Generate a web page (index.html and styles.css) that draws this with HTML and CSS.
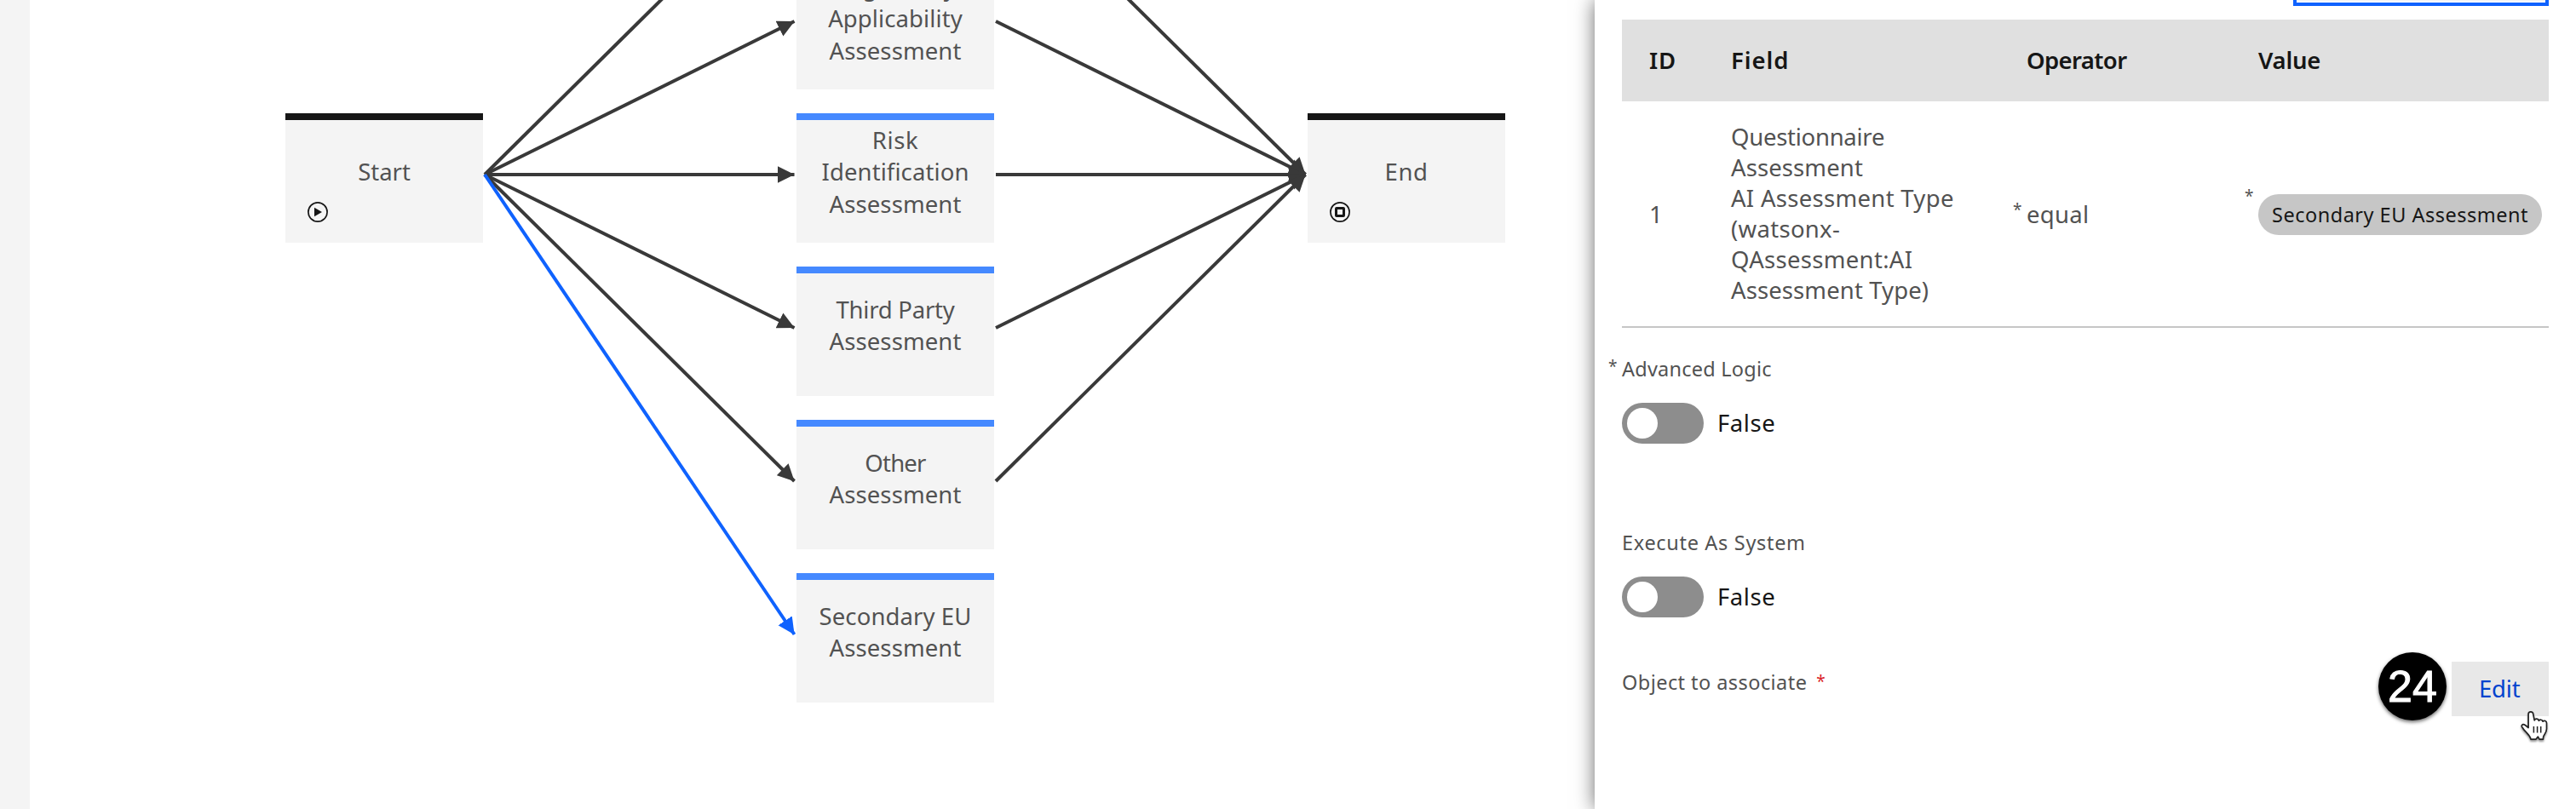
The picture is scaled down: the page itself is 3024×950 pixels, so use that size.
FILE: index.html
```
<!DOCTYPE html>
<html lang="en">
<head>
<meta charset="utf-8">
<title>Workflow designer</title>
<link rel="stylesheet" href="styles.css">
</head>
<body>
<div class="app">
  <aside class="rail"></aside>

  <main class="canvas">
    <svg class="edges" width="1837" height="950" viewBox="35 0 1837 950">
      <defs>
        <marker id="arrow" markerUnits="userSpaceOnUse" markerWidth="20" markerHeight="20" refX="19.5" refY="10" orient="auto"><path d="M0 0.2 19.7 10 0 19.8z" fill="#393939"/></marker>
        <marker id="arrow-active" markerUnits="userSpaceOnUse" markerWidth="20" markerHeight="20" refX="19.5" refY="10" orient="auto"><path d="M0 0.2 19.7 10 0 19.8z" fill="#0f62fe"/></marker>
      </defs>
      <g class="edge">
        <path d="M569 205 932.5-155"/>
        <path d="M569 205 932.5 25"/>
        <path d="M569 205H932.5"/>
        <path d="M569 205 932.5 385"/>
        <path d="M569 205 932.5 565"/>
        <path d="M1169-155 1532.5 205"/>
        <path d="M1169 25 1532.5 205"/>
        <path d="M1169 205H1532.5"/>
        <path d="M1169 385 1532.5 205"/>
        <path d="M1169 565 1532.5 205"/>
      </g>
      <path class="edge-active" d="M569 205 932.5 745"/>
    </svg>

    <div class="node terminal start"><span>Start</span>
      <svg class="mark" viewBox="0 0 24 24"><circle cx="12" cy="12" r="11.1" fill="none" stroke="#161616" stroke-width="1.7"/><path d="M8 6.8v10.4L17 12z" fill="#161616"/></svg>
    </div>
    <div class="node task n1"><span class="t1">Regulatory</span><span class="t1">Applicability</span><span class="t1">Assessment</span></div>
    <div class="node task n2"><span class="t6">Risk</span><span class="t1">Identification</span><span class="t1">Assessment</span></div>
    <div class="node task n3"><span class="tm2">Third Party</span><span class="t1">Assessment</span></div>
    <div class="node task n4"><span class="tm8">Other</span><span class="t1">Assessment</span></div>
    <div class="node task n5"><span class="t1">Secondary EU</span><span class="t1">Assessment</span></div>
    <div class="node terminal end"><span class="t6">End</span>
      <svg class="mark" viewBox="0 0 24 24"><circle cx="12" cy="12" r="11.1" fill="none" stroke="#161616" stroke-width="1.7"/><rect x="7.5" y="7.5" width="9" height="9" rx=".5" fill="none" stroke="#161616" stroke-width="3"/></svg>
    </div>
  </main>

  <section class="panel">
    <div class="focused"></div>

    <div class="table">
      <div class="row head">
        <div class="t9">ID</div><div class="t9">Field</div><div class="tm6">Operator</div><div class="tm2">Value</div>
      </div>
      <div class="row item">
        <div class="num">1</div>
        <div class="field"><span class="tm3">Questionnaire</span><span class="t1">Assessment</span><span class="t3">AI Assessment Type</span><span class="t3">(watsonx-</span><span class="t3">QAssessment:AI</span><span class="t1">Assessment Type)</span></div>
        <div class="operator t3"><i class="req">*</i>equal</div>
        <div class="value"><i class="req">*</i><span class="tag">Secondary EU Assessment</span></div>
      </div>
    </div>

    <div class="control first">
      <div class="label t2"><i class="req">*</i>Advanced Logic</div>
      <div class="switch"><div class="toggle"><b></b></div><span>False</span></div>
    </div>
    <div class="control second">
      <div class="label t7">Execute As System</div>
      <div class="switch"><div class="toggle"><b></b></div><span>False</span></div>
    </div>
    <div class="associate">
      <div class="label t4">Object to associate<i class="star">*</i></div>
      <div class="actions"><div class="step">24</div><button class="edit">Edit
        <svg class="pointer" viewBox="0 0 34 38"><path d="M10.1 20.5V4.8c0-3.9 5.4-3.9 5.7 0l1.4 7.1c1-2.5 4.6-2.3 5.2.4.9-1.7 4.1-1.4 4.7.9 1.5-1.6 4.4-.9 4.4 1.9v6.8c0 3.8-2.8 6.4-3.8 9.3l-.3 3-4.3-.1-1.7-3-2.6 3.1h-5.7c-1.8-6.2-6.7-8.4-9.4-13-3.1-3-.6-5.9 2.6-3.7z" fill="#fff" stroke="#222" stroke-width="1.7" stroke-linejoin="round"/><path d="M16.4 19v7.5M20.6 19v7.5M24.7 19v7.5" stroke="#222" stroke-width="1.5"/></svg>
      </button></div>
    </div>
  </section>
</div>
</body>
</html>
```
FILE: styles.css
```
* { box-sizing: border-box; }
body {
  margin: 0;
  background: #fff;
  color: #525252;
  font: 27.5px/36px "Noto Sans", sans-serif;
}
.app { display: flex; width: 3024px; height: 950px; overflow: hidden; }
.rail { width: 35px; background: #f4f4f4; }
.canvas { position: relative; width: 1837px; overflow: hidden; }
.edges { display: block; }
.edge, .edge-active { fill: none; stroke-width: 4; }
.edge path { stroke: #393939; marker-end: url(#arrow); }
.edge-active { stroke: #0f62fe; marker-end: url(#arrow-active); }

/* Diagram nodes */
.node {
  position: absolute;
  display: flex;
  flex-direction: column;
  align-items: center;
  justify-content: center;
  width: 232px;
  height: 152px;
  padding-bottom: 22px;
  border-top: 8px solid #4589ff;
  background: #f4f4f4;
  line-height: 37.2px;
}
.terminal { top: 133px; border-color: #161616; }
.start { left: 300px; }
.end { left: 1500px; }
.task { left: 900px; }
.n1 { top: -47px; }
.n2 { top: 133px; }
.n3 { top: 313px; }
.n4 { top: 493px; }
.n5 { top: 673px; }
.mark { position: absolute; left: 26px; bottom: 24px; width: 24px; height: 24px; }

/* Letter spacing steps */
.t1 { letter-spacing: .1px; }
.t2 { letter-spacing: .23px; }
.t3 { letter-spacing: .3px; }
.t4 { letter-spacing: .44px; }
.t6 { letter-spacing: .6px; }
.t7 { letter-spacing: .68px; }
.t9 { letter-spacing: .95px; }
.tm2 { letter-spacing: -.23px; }
.tm3 { letter-spacing: -.27px; }
.tm6 { letter-spacing: -.63px; }
.tm8 { letter-spacing: -.8px; }

.panel {
  position: relative;
  flex: 1;
  padding: 0 32px;
  background: #fff;
  box-shadow: 0 0 22px rgba(0, 0, 0, .58);
}
.focused {
  width: 300px;
  height: 7px;
  margin: 0 0 16px auto;
  border: 4px solid #0f62fe;
  border-top: 0;
  background: linear-gradient(#f4f4f4 1px, #fff 1px);
}
.row {
  display: grid;
  grid-template-columns: 96px 347px 272px 1fr;
  align-items: center;
  padding-left: 32px;
}
.head { height: 96px; background: #e0e0e0; color: #161616; font-weight: 600; }
.item { height: 266px; border-bottom: 2px solid #c6c6c6; }
.field { display: flex; flex-direction: column; }
.num, .operator { position: relative; padding-top: 1px; }
.value { position: relative; display: flex; padding-top: 1px; }
.tag {
  height: 48px;
  padding: 0 16px;
  border-radius: 24px;
  background: #c6c6c6;
  color: #161616;
  font-size: 23.5px;
  line-height: 48px;
  letter-spacing: .5px;
}
.req, .star { font-style: normal; font-size: 19px; line-height: 20px; letter-spacing: 0; }
.req { position: absolute; left: -16px; top: 3px; }
.value .req { top: -7px; }

.label { position: relative; font-size: 23.5px; line-height: 32px; }
.first { margin-top: 32px; }
.second { margin-top: 100px; }
.switch { display: flex; align-items: center; gap: 16px; margin-top: 24px; color: #161616; letter-spacing: .55px; }
.toggle { width: 96px; height: 48px; padding: 6px; border-radius: 24px; background: #8d8d8d; }
.toggle b { display: block; width: 36px; height: 36px; border-radius: 50%; background: #fff; }

.associate { display: flex; justify-content: space-between; margin-top: 52px; }
.associate .label { padding-top: 8px; }
.star { margin-left: 11px; color: #da1e28; vertical-align: 3px; }
.actions { display: flex; gap: 6px; height: 64px; }
.step {
  width: 80px;
  height: 80px;
  margin-top: -11px;
  border-radius: 50%;
  background: #000;
  box-shadow: 0 2px 4px rgba(0, 0, 0, .6);
  color: #fff;
  font: 52px/80px "Liberation Sans", Arial, sans-serif;
  text-align: center;
  -webkit-text-stroke: 1px #fff;
}
.edit {
  position: relative;
  width: 114px;
  height: 64px;
  padding: 0 0 0 32px;
  border: 0;
  background: #e8e8e8;
  color: #0043ce;
  font: inherit;
  letter-spacing: -.2px;
  text-align: left;
}
.pointer {
  position: absolute;
  left: 80px;
  top: 57px;
  width: 34px;
  height: 38px;
  filter: drop-shadow(0 2px 1px rgba(0, 0, 0, .4));
}
```
